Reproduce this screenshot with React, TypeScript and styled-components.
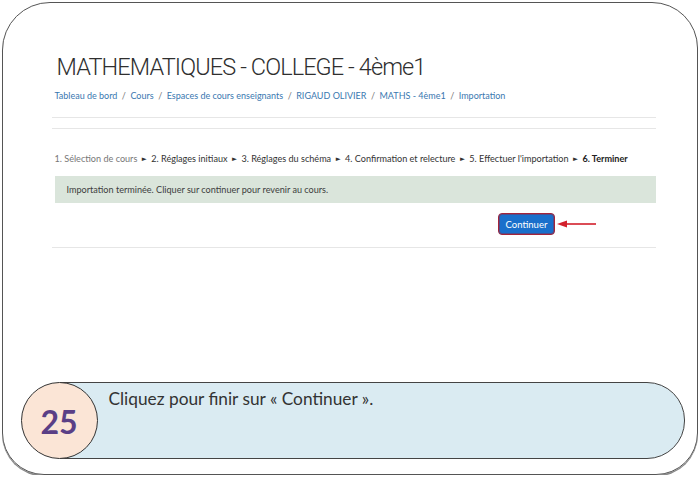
import React from "react";
import styled, { createGlobalStyle } from "styled-components";

const GlobalStyle = createGlobalStyle`
  html, body {
    margin: 0;
    padding: 0;
    background: #fff;
  }
  body {
    font-family: "Lato", "Open Sans", sans-serif;
  }
`;

const steps = [
  "2. Réglages initiaux",
  "3. Réglages du schéma",
  "4. Confirmation et relecture",
  "5. Effectuer l'importation",
];

const crumbs = [
  "Tableau de bord",
  "Cours",
  "Espaces de cours enseignants",
  "RIGAUD OLIVIER",
  "MATHS - 4ème1",
  "Importation",
];

export default function App() {
  return (
    <>
      <GlobalStyle />
      <StyledFrame>
        <StyledContent>
          <StyledTitle>MATHEMATIQUES - COLLEGE - 4ème1</StyledTitle>
          <StyledCrumbs>
            {crumbs.map((c, i) => (
              <React.Fragment key={c}>
                {i > 0 && <StyledSep>/</StyledSep>}
                <span>{c}</span>
              </React.Fragment>
            ))}
          </StyledCrumbs>
          <StyledRule $gap={14} />
          <StyledRule $gap={10} />
          <StyledSteps>
            <StyledStepDone>1. Sélection de cours</StyledStepDone>
            {steps.map((s) => (
              <React.Fragment key={s}>
                <StyledArrow>►</StyledArrow>
                {s}
              </React.Fragment>
            ))}
            <StyledArrow>►</StyledArrow>
            <StyledStepCurrent>6. Terminer</StyledStepCurrent>
          </StyledSteps>
          <StyledAlert>
            Importation terminée. Cliquer sur continuer pour revenir au cours.
          </StyledAlert>
          <StyledButtonRow>
            <StyledButton>Continuer</StyledButton>
            <svg width="40" height="10" viewBox="0 0 40 10">
              <polygon points="0,5 10,1.5 10,8.5" fill="#d3202c" />
              <line x1="8" y1="5" x2="39" y2="5" stroke="#d3202c" strokeWidth="1.6" />
            </svg>
          </StyledButtonRow>
          <StyledRule $gap={12} />
        </StyledContent>
        <StyledCallout>
          <StyledNumber>25</StyledNumber>
          <StyledBubble>Cliquez pour finir sur « Continuer ».</StyledBubble>
        </StyledCallout>
      </StyledFrame>
    </>
  );
}

const StyledFrame = styled.div`
  box-sizing: border-box;
  margin: 2px 2px 0 2px;
  width: 696px;
  height: 473px;
  border: 1.5px solid #555;
  border-radius: 48px 46px 42px 42px;
  box-shadow: 0 1.5px 0 #8a8a8a;
  display: flex;
  flex-direction: column;
`;

const StyledContent = styled.div`
  padding: 48px 41px 0 48.5px;
  display: flex;
  flex-direction: column;
`;

const StyledTitle = styled.h1`
  margin: 0 0 0 5px;
  font-family: "Roboto", "Open Sans", sans-serif;
  font-size: 23.5px;
  font-weight: 300;
  line-height: 32px;
  letter-spacing: -0.9px;
  color: #2f2f2f;
  white-space: nowrap;
`;

const StyledCrumbs = styled.div`
  margin: 6px 0 0 3px;
  font-size: 9px;
  line-height: 14px;
  color: #3a78b0;
`;

const StyledSep = styled.span`
  margin: 0 4.5px;
  color: #777;
`;

const StyledRule = styled.div<{ $gap: number }>`
  margin-top: ${({ $gap }) => $gap}px;
  border-top: 1px solid #e6e6e6;
`;

const StyledSteps = styled.div`
  margin: 23px 0 0 3px;
  font-size: 9.1px;
  line-height: 14px;
  color: #333;
  white-space: nowrap;
`;

const StyledStepDone = styled.span`
  color: #777;
`;

const StyledArrow = styled.span`
  margin: 0 3px;
  font-size: 8px;
  color: #333;
  display: inline-block;
  transform: scaleY(0.75);
`;

const StyledStepCurrent = styled.b`
  font-weight: 700;
  color: #222;
`;

const StyledAlert = styled.div`
  margin: 10px 0 0 3px;
  height: 27px;
  box-sizing: border-box;
  padding: 0 12px;
  display: flex;
  align-items: center;
  background: #dae5db;
  font-size: 9.1px;
  color: #3d3d3d;
`;

const StyledButtonRow = styled.div`
  margin-top: 10px;
  display: flex;
  align-items: center;
  justify-content: flex-end;
  gap: 2px;
  padding-right: 59px;
`;

const StyledButton = styled.button`
  box-sizing: border-box;
  width: 57px;
  height: 22px;
  padding: 0;
  border: 1.5px solid #a3243a;
  border-radius: 4px;
  background: #1a6fcb;
  box-shadow: inset 0 0 0 1px #4d4f8e;
  color: #fff;
  font-family: "Lato", sans-serif;
  font-size: 9.5px;
`;

const StyledCallout = styled.div`
  margin: auto 12.5px 15px 17.5px;
  display: flex;
  align-items: center;
`;

const StyledNumber = styled.div`
  position: relative;
  z-index: 1;
  flex-shrink: 0;
  box-sizing: border-box;
  width: 77px;
  height: 77px;
  border: 1.5px solid #333;
  border-radius: 50%;
  background: #fbe5d6;
  display: flex;
  align-items: center;
  justify-content: center;
  padding-top: 2px;
  font-family: "Lato", sans-serif;
  font-weight: 700;
  font-size: 32px;
  color: #5a3f86;
`;

const StyledBubble = styled.div`
  flex: 1;
  box-sizing: border-box;
  height: 77px;
  margin-left: -38px;
  padding: 5px 0 0 48px;
  border: 1.5px solid #444;
  border-radius: 0 38px 38px 0;
  background: #daebf2;
  font-family: "Lato", sans-serif;
  font-size: 17.3px;
  line-height: 22px;
  color: #333;
`;
